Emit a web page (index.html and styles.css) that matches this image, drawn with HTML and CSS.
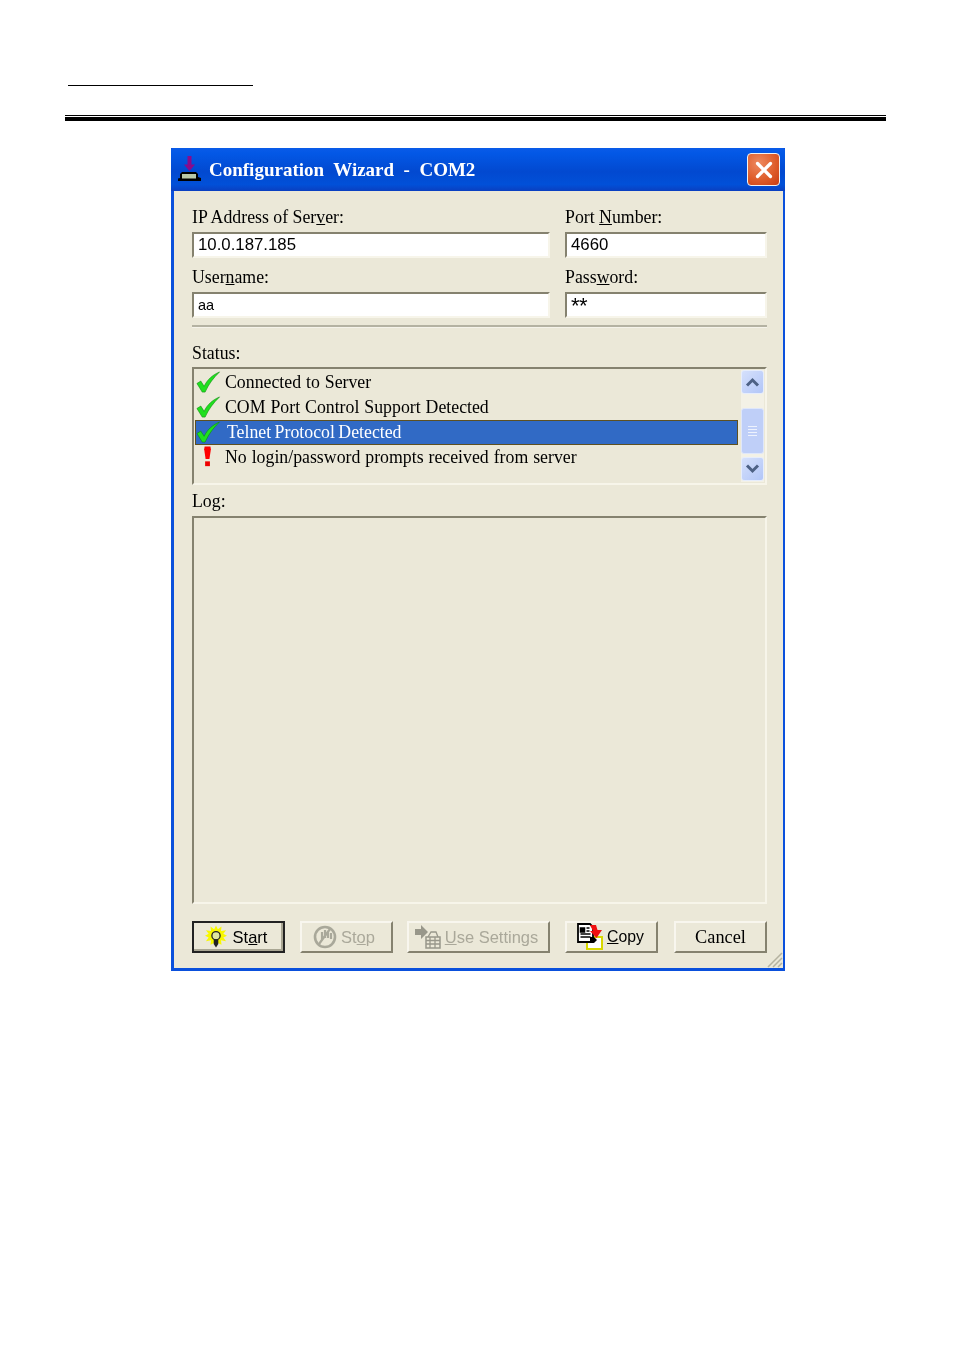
FILE: index.html
```html
<!DOCTYPE html>
<html lang="en">
<head>
<meta charset="utf-8">
<title>Configuration Wizard - COM2</title>
<link rel="stylesheet" href="styles.css">
</head>
<body>
<header class="doc-head">
  <div class="short-rule"></div>
  <div class="double-rule"></div>
</header>
<main class="window">
  <div class="titlebar">
    <svg class="title-icon" width="24" height="26" viewBox="0 0 24 26">
      <path d="M9.500 0h4v8.500h3.500L11.500 15 6 8.500h3.500z" fill="#8b0a8b"/>
      <path d="M0 25v-2.500l2-.5v-4l2-2h14l2 2v3l3 1v3z" fill="#000"/>
      <rect x="4" y="18" width="14" height="4.500" fill="#b9c8a8"/>
    </svg>
    <span class="title-text">Configuration&nbsp; Wizard&nbsp; -&nbsp; COM2</span>
    <div class="close">
      <svg width="20" height="20" viewBox="0 0 20 20"><path d="M3.500 3.500l13 13M16.500 3.500l-13 13" stroke="#fff" stroke-width="3.200" stroke-linecap="round"/></svg>
    </div>
  </div>
  <div class="client">
    <div class="form-grid">
      <div class="field">
        <label class="label">IP Address of Ser<u>v</u>er:</label>
        <div class="input sans big">10.0.187.185</div>
      </div>
      <div class="field">
        <label class="label">Port <u>N</u>umber:</label>
        <div class="input sans big">4660</div>
      </div>
      <div class="field">
        <label class="label">User<u>n</u>ame:</label>
        <div class="input sans small">aa</div>
      </div>
      <div class="field">
        <label class="label">Pass<u>w</u>ord:</label>
        <div class="input sans stars">**</div>
      </div>
    </div>
    <div class="separator"></div>
    <div class="label status-label">Status:</div>
    <div class="listbox sunken">
      <ul class="rows">
        <li class="row"><svg class="check" width="26" height="25" viewBox="0 0 26 26"><path d="M1.500 14l4-2.500 3.500 5.500C12 10 18 5 25 2c-6 6-11 12-15 21H7z" fill="#1fe01f" stroke="#0a8a0a" stroke-width=".6"/></svg><span>Connected to Server</span></li>
        <li class="row"><svg class="check" width="26" height="25" viewBox="0 0 26 26"><path d="M1.500 14l4-2.500 3.500 5.500C12 10 18 5 25 2c-6 6-11 12-15 21H7z" fill="#1fe01f" stroke="#0a8a0a" stroke-width=".6"/></svg><span>COM Port Control Support Detected</span></li>
        <li class="row selected"><svg class="check" width="26" height="25" viewBox="0 0 26 26"><path d="M1.500 14l4-2.500 3.500 5.500C12 10 18 5 25 2c-6 6-11 12-15 21H7z" fill="#1fe01f" stroke="#0a8a0a" stroke-width=".6"/></svg><span>Telnet Protocol Detected</span></li>
        <li class="row row-last"><svg class="check" width="26" height="25" viewBox="0 0 26 26"><path d="M9.500 1.500h6l.5 3-1.500 10h-4L9 4.500z" fill="#f00"/><rect x="10" y="17" width="5" height="5" fill="#e00"/></svg><span>No login/password prompts received from server</span></li>
      </ul>
      <div class="scrollbar">
        <div class="sb-btn"><svg width="15" height="10" viewBox="0 0 15 10"><path d="M2 8.500l5.500-5.500 5.500 5.500" fill="none" stroke="#4d6185" stroke-width="3"/></svg></div>
        <div class="sb-track"></div>
        <div class="sb-thumb"><span class="grip"></span><span class="grip"></span><span class="grip"></span><span class="grip"></span></div>
        <div class="sb-btn"><svg width="15" height="10" viewBox="0 0 15 10"><path d="M2 1.500l5.500 5.500 5.500-5.500" fill="none" stroke="#4d6185" stroke-width="3"/></svg></div>
      </div>
    </div>
    <div class="label log-label">Log:</div>
    <div class="logbox sunken"></div>
    <div class="buttons">
      <button class="btn default sans w93 nudge-start">
        <svg width="22" height="25" viewBox="0 0 24 26"><path d="M12 0l2 4 4-3-.5 5 5.500-1-3 4 4 2-4 2 3 4-5.500-1 .5 5-6-3-6 3 .5-5L1 17l3-4-4-2 4-2-3-4 5.500 1L6 1l4 3z" fill="#f8f800"/><circle cx="12" cy="11" r="4.500" fill="#dfe8a0" stroke="#222" stroke-width="1.400"/><path d="M9.500 15h5v5l-2.500 4-2.500-4z" fill="#222"/></svg>
        <span>St<u>a</u>rt</span>
      </button>
      <button class="btn disabled sans w93 nudge-stop">
        <svg width="24" height="26" viewBox="0 0 24 26"><circle cx="12" cy="13" r="10" fill="none" stroke="#a9a89a" stroke-width="2.600"/><path d="M6 20L17 5M9 8v8M12 6v8M15 7v7M18 9v6" stroke="#a9a89a" stroke-width="2.200"/></svg>
        <span>St<u>o</u>p</span>
      </button>
      <button class="btn disabled sans w143 shift-left nudge-use">
        <svg width="26" height="24" viewBox="0 0 26 24"><path d="M0 4h6V0l7 7-7 7v-4H0z" fill="#98978a"/><path d="M11 12h14v11H11z" fill="#ece9d8" stroke="#98978a" stroke-width="1.500"/><path d="M11 15.500h14M11 19h14M15 12v11M20 12v11M13 12l3-5h5l2 5" fill="none" stroke="#98978a" stroke-width="1.300"/></svg>
        <span><u>U</u>se Settings</span>
      </button>
      <button class="btn sans w93 nudge-copy">
        <svg width="26" height="28" viewBox="0 0 26 28"><path d="M10 14h15v12H10z" fill="#fff" stroke="#d8d800" stroke-width="2"/><path d="M1 1h12l3 3v15H1z" fill="#fff" stroke="#000" stroke-width="1.800"/><path d="M3.500 5h4v4h-4zM3.500 11h10M3.500 14h10M9.500 5h3M9.500 8h3" stroke="#000" stroke-width="1.500" fill="#000"/><path d="M13 14h4l3 3-3 3-4-2z" fill="#000"/><path d="M13 2h6l1.500 5H25l-5.500 8L13 8h3z" fill="#f01010"/></svg>
        <span><u>C</u>opy</span>
      </button>
      <button class="btn serif-btn w93 shift-right"><span>Cancel</span></button>
    </div>
    <svg class="resize-grip" width="18" height="18" viewBox="0 0 18 18"><path d="M17 3L3 17M17 8L8 17M17 13l-4 4" stroke="#b5b2a0" stroke-width="1.500"/></svg>
  </div>
</main>
</body>
</html>
```
FILE: styles.css
```css
* { box-sizing: border-box; }
html, body { margin: 0; padding: 0; background: #fff; }
body { width: 954px; height: 1350px; overflow: hidden; font-family: "Liberation Serif", serif; color: #000; }

.doc-head { padding: 85px 68px 0 65px; }
.short-rule { width: 185px; height: 1px; background: #000; margin-left: 3px; }
.double-rule { width: 821px; height: 6px; margin-top: 29px; border-top: 1px solid #000; border-bottom: 4px solid #000; }

.window { position: relative; width: 614px; height: 823px; margin: 27px 0 0 171px; background: #0a50dc; display: flex; flex-direction: column; filter: blur(.35px); }
.titlebar { height: 43px; flex: none; display: flex; align-items: center; padding: 0 5px 0 7px; background: linear-gradient(#0a5be8 0, #0358e6 12%, #0249d0 55%, #0150d8 85%, #0a3fc0 100%); border-radius: 3px 3px 0 0; }
.title-icon { flex: none; margin-right: 7px; margin-top: -1px; }
.title-text { flex: 1; color: #fff; font-family: "Liberation Serif", serif; font-weight: bold; font-size: 19px; white-space: nowrap; }
.close { width: 33px; height: 33px; flex: none; border: 1.500px solid #f2f2f2; border-radius: 4px; background: radial-gradient(circle at 35% 30%, #ee8a60, #dd5a28 60%, #c83c14); display: flex; align-items: center; justify-content: center; }

.client { position: relative; flex: 1; margin: 0 2px 3px 3px; background: #ebe8d8; padding: 17px 16px 0 18px; }
.form-grid { display: grid; grid-template-columns: 358px 202px; column-gap: 15px; row-gap: 10px; }
.field { display: flex; flex-direction: column; }
.label { display: block; height: 18px; line-height: 18px; font-size: 17.800px; margin-bottom: 6px; white-space: nowrap; }
.sans { font-family: "Liberation Sans", sans-serif; }
.input { height: 26px; background: #fff; border: 2px solid; border-color: #85826f #f7f5ea #f7f5ea #85826f; padding-left: 4px; white-space: nowrap; }
.big { font-size: 16.800px; line-height: 22px; }
.small { font-size: 14.500px; line-height: 23px; }
.stars { font-size: 22px; line-height: 24px; letter-spacing: -.5px; }
.separator { height: 3px; margin-top: 7px; background: #b4b2a2; border-bottom: 1px solid #f5f3ea; }
.status-label { margin-top: 16px; margin-bottom: 5px; }
.sunken { border: 2px solid; border-color: #85826f #f7f5ea #f7f5ea #85826f; }
.listbox { height: 118px; display: flex; padding: 1px 1px 1px 1px; }
.rows { flex: 1; list-style: none; margin: 0; padding: 0; min-width: 0; }
.row { height: 25px; display: flex; align-items: center; font-size: 17.800px; word-spacing: .5px; white-space: nowrap; }
.row span { margin-left: 4px; }
.row-last { padding-bottom: 1px; }
.check { flex: none; }
.selected { background: #316ac5; color: #fff; outline: 1px solid #5e5020; outline-offset: -1px; width: 543px; word-spacing: -1px; }
.selected span { margin-left: 6px; }
.scrollbar { flex: none; width: 23px; margin-left: 3px; display: flex; flex-direction: column; background: #f3f1e6; }
.sb-btn { height: 24px; flex: none; border-radius: 3px; background: linear-gradient(135deg, #d5e0fb, #b2c6f8); border: 1px solid #e6edfc; display: flex; align-items: center; justify-content: center; }
.sb-track { height: 14px; flex: none; }
.sb-thumb { height: 46px; flex: none; border-radius: 3px; background: #bfcff8; border: 1px solid #dfe7fb; margin-bottom: 3px; display: flex; flex-direction: column; gap: 2px; align-items: center; justify-content: center; }
.grip { width: 9px; height: 1px; background: #edf2fd; }
.log-label { margin-top: 7px; margin-bottom: 6px; }
.logbox { height: 388px; }
.buttons { display: flex; margin-top: 17px; gap: 15px; }
.btn { height: 32px; padding: 0; margin: 0; display: flex; align-items: center; justify-content: center; gap: 4px; background: #ebe8d8; color: #000; font-size: 16.500px; border: 2px solid; border-color: #f8f6ee #85826f #85826f #f8f6ee; white-space: nowrap; }
.w93 { width: 93px; }
.w143 { width: 143px; }
.shift-left { margin-left: -1px; }
.shift-right { margin-left: 1px; }
.nudge-start { padding-right: 5px; }
.nudge-stop { padding-right: 5px; }
.nudge-use { padding-right: 4px; }
.nudge-copy { padding-right: 2px; font-size: 15.800px; }
.default { border: 2px solid #222; box-shadow: inset -2px -2px 0 #a9a693; gap: 6px; }
.disabled { color: #aaa89a; }
.serif-btn { font-family: "Liberation Serif", serif; font-size: 18.300px; }
.resize-grip { position: absolute; right: 0; bottom: 0; }
```
